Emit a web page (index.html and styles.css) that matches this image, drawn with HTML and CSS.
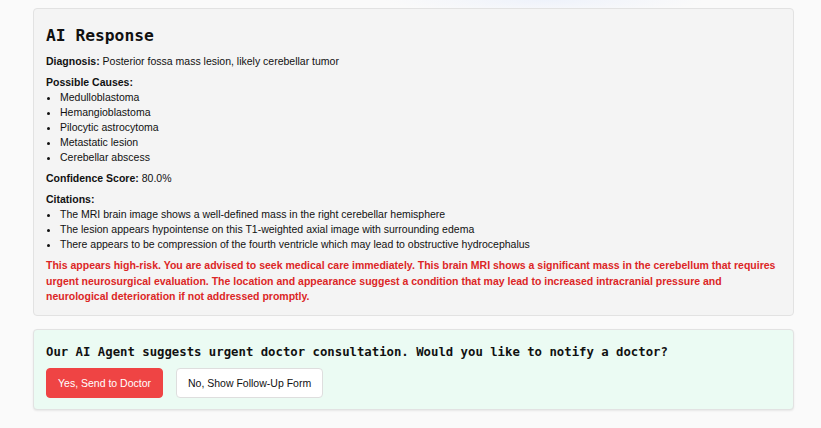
FILE: index.html
```html
<!DOCTYPE html>
<html>
<head>
<meta charset="utf-8">
<link rel="stylesheet" href="styles.css">
</head>
<body>
<div class="page">
  <section class="card response">
    <h2 class="title">AI Response</h2>
    <p class="line"><strong>Diagnosis:</strong> Posterior fossa mass lesion, likely cerebellar tumor</p>
    <div class="group">
      <p class="label"><strong>Possible Causes:</strong></p>
      <ul class="list">
        <li>Medulloblastoma</li>
        <li>Hemangioblastoma</li>
        <li>Pilocytic astrocytoma</li>
        <li>Metastatic lesion</li>
        <li>Cerebellar abscess</li>
      </ul>
    </div>
    <p class="line"><strong>Confidence Score:</strong> 80.0%</p>
    <div class="group">
      <p class="label"><strong>Citations:</strong></p>
      <ul class="list">
        <li>The MRI brain image shows a well-defined mass in the right cerebellar hemisphere</li>
        <li>The lesion appears hypointense on this T1-weighted axial image with surrounding edema</li>
        <li>There appears to be compression of the fourth ventricle which may lead to obstructive hydrocephalus</li>
      </ul>
    </div>
    <p class="warning">This appears high-risk. You are advised to seek medical care immediately. This brain MRI shows a significant mass in the cerebellum that requires urgent neurosurgical evaluation. The location and appearance suggest a condition that may lead to increased intracranial pressure and neurological deterioration if not addressed promptly.</p>
  </section>
  <section class="card consult">
    <p class="question">Our AI Agent suggests urgent doctor consultation. Would you like to notify a doctor?</p>
    <div class="actions">
      <button class="btn btn-primary">Yes, Send to Doctor</button>
      <button class="btn btn-secondary">No, Show Follow-Up Form</button>
    </div>
  </section>
</div>
</body>
</html>
```
FILE: styles.css
```css
html, body {
  margin: 0;
  padding: 0;
}
body {
  background: #fafafa radial-gradient(ellipse 160px 14px at 545px 0, #eef2fb, rgba(250,250,250,0));
  font-family: "Liberation Sans", Arial, sans-serif;
  color: #111;
  width: 821px;
  height: 428px;
  overflow: hidden;
}
.page {
  padding: 8px 0 0 33px;
  width: 761px;
  display: flex;
  flex-direction: column;
  gap: 13px;
}
.card {
  border: 1px solid #e2e2e2;
  border-radius: 4px;
  box-sizing: border-box;
}
.response {
  background: #f4f4f4;
  padding: 15px 12px 10px 12px;
  display: flex;
  flex-direction: column;
  gap: 6px;
}
.title {
  font-family: "DejaVu Sans Mono", "Liberation Mono", monospace;
  font-size: 16.3px;
  font-weight: bold;
  margin: 0;
  line-height: 24px;
}
p { margin: 0; }
.line, .label, .list {
  font-size: 10.5px;
  line-height: 15px;
}
.list {
  margin: 0;
  padding-left: 14px;
}
.warning {
  color: #dc2626;
  font-weight: bold;
  font-size: 10.5px;
  line-height: 15.5px;
}
.consult {
  background: #ebfbf3;
  padding: 13px 12px 11px 12px;
  box-shadow: 0 1px 2px rgba(0,0,0,0.08);
  display: flex;
  flex-direction: column;
  gap: 7px;
}
.question {
  font-family: "DejaVu Sans Mono", "Liberation Mono", monospace;
  font-weight: bold;
  font-size: 12.3px;
  line-height: 18px;
}
.actions {
  display: flex;
  gap: 13px;
}
.btn {
  font-family: "Liberation Sans", Arial, sans-serif;
  font-size: 10.5px;
  height: 30px;
  border-radius: 4px;
  padding: 0 11px;
  cursor: pointer;
}
.btn-primary {
  background: #ef4444;
  color: #fff;
  border: 1px solid #ef4444;
}
.btn-secondary {
  background: #fff;
  color: #111;
  border: 1px solid #dedede;
}
```
